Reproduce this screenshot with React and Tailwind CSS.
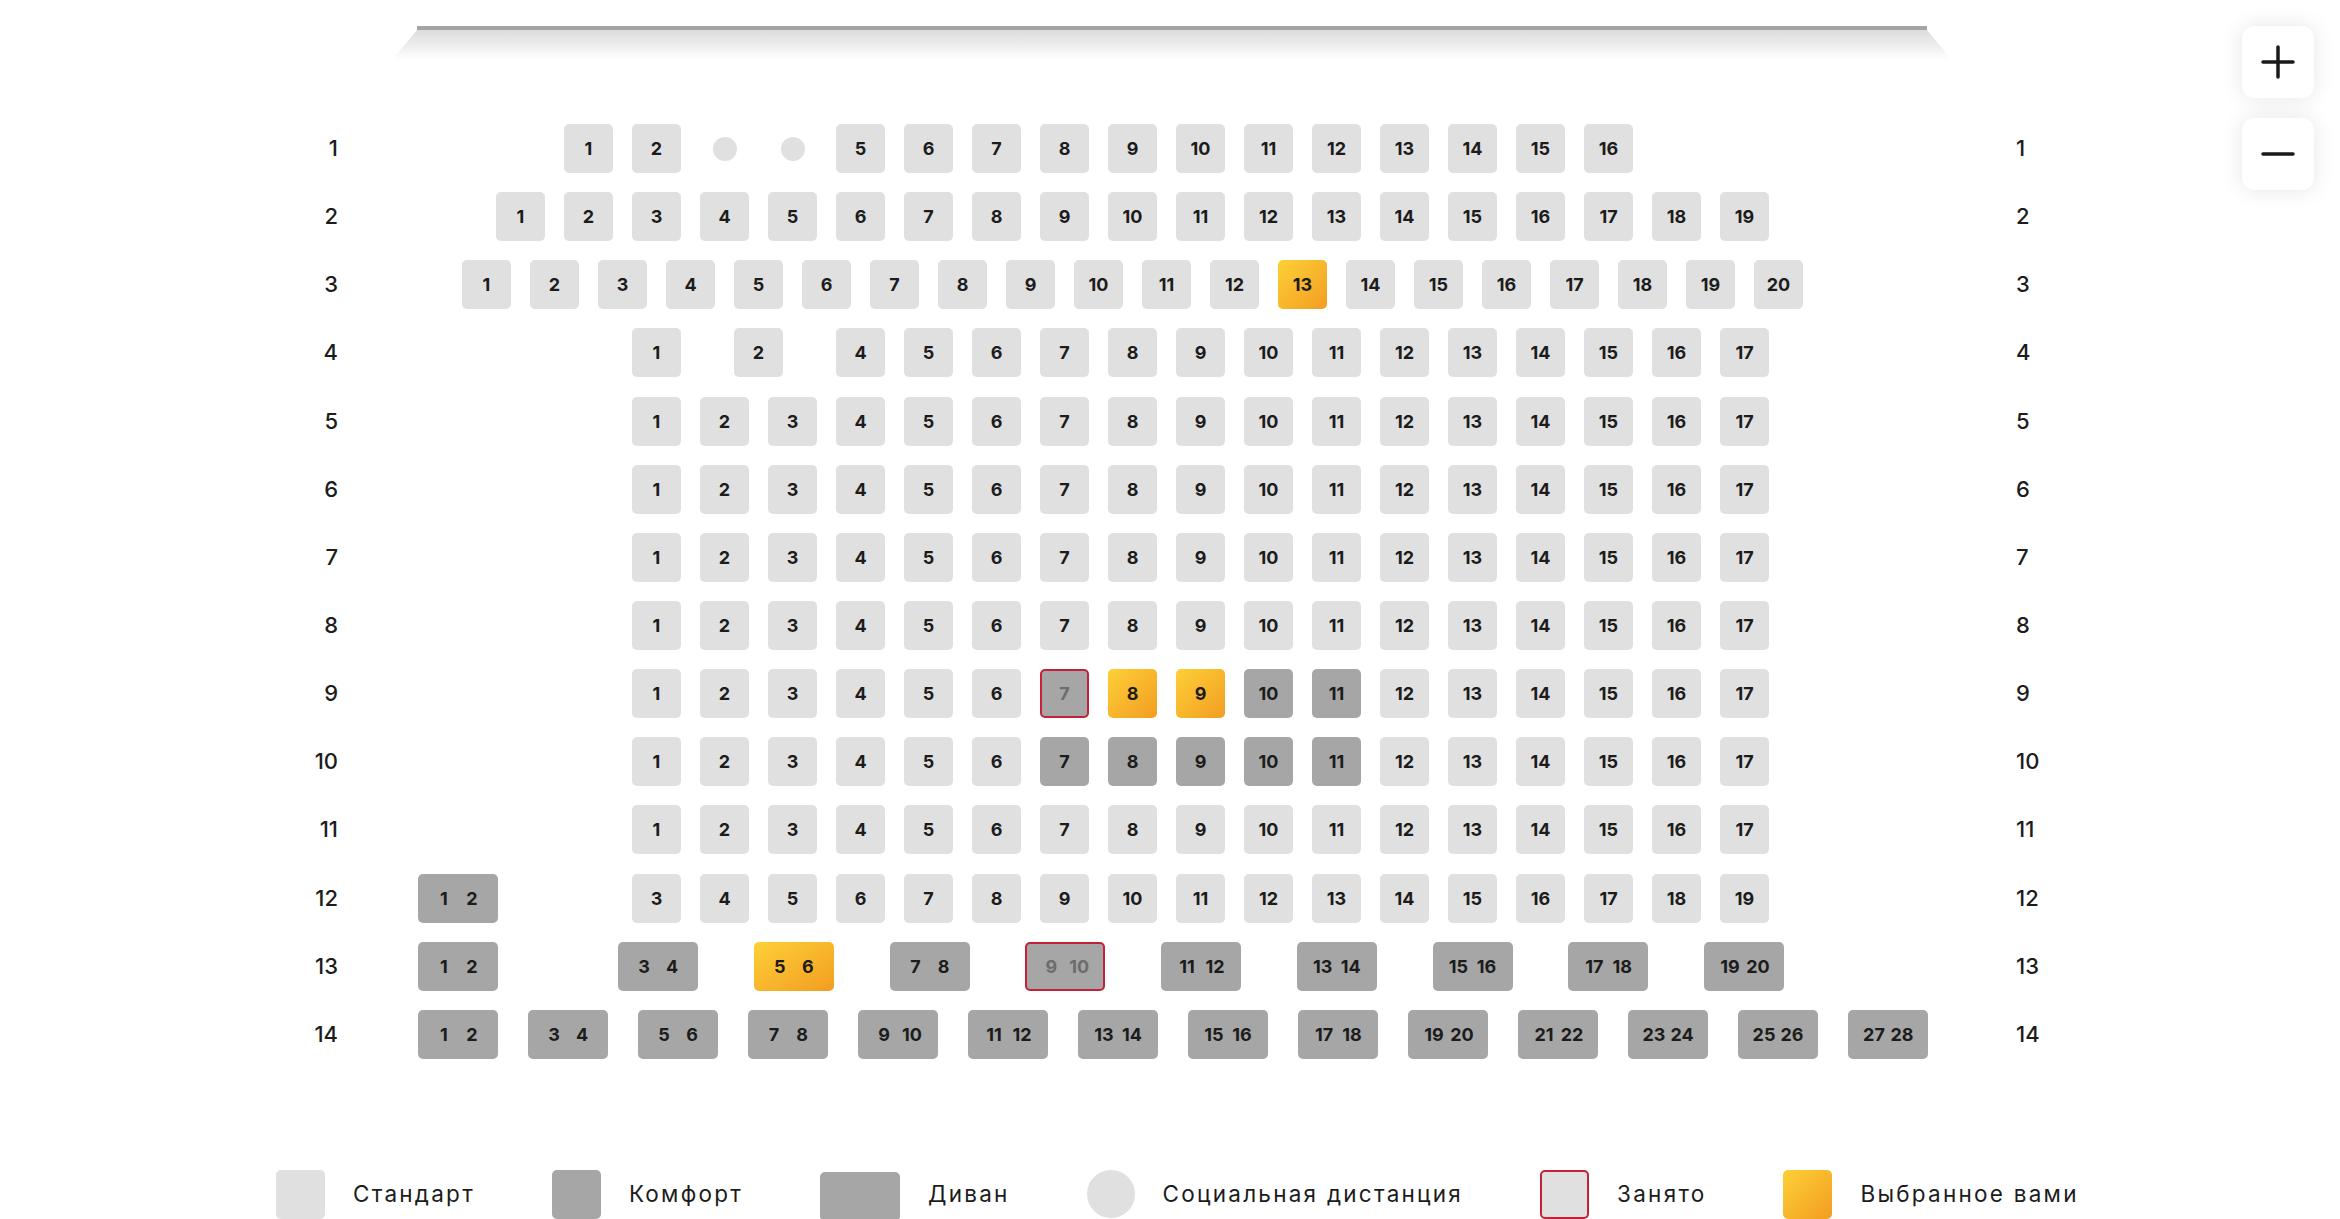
import React from "react";

const tone = {
  std: "bg-[#e0e0e0] text-[#1c1c1c]",
  cmf: "bg-[#a6a6a6] text-[#1c1c1c]",
  busy: "bg-[#a6a6a6] text-[#6c6c6c] border-2 border-[#c4203a]",
  sel: "bg-linear-to-br from-[#fdd037] to-[#f29d22] text-[#1c1c1c]",
};

const range = (a, b) => Array.from({ length: b - a + 1 }, (_, i) => a + i);
const plain = (a, b, type = "std") => range(a, b).map((n) => ({ n, type }));

// rows 1..11: pitch 68 (49 seat + 19 gap)
const rows = [
  { label: 1, pad: "pl-[146px]", seats: [...plain(1, 2), { n: 3, type: "dist" }, { n: 4, type: "dist" }, ...plain(5, 16)] },
  { label: 2, pad: "pl-[78px]", seats: plain(1, 19) },
  { label: 3, pad: "pl-[44px]", seats: [...plain(1, 12), { n: 13, type: "sel" }, ...plain(14, 20)] },
  { label: 4, pad: "pl-[214px]", seats: [{ n: 1, type: "std" }, { n: 2, type: "std", ml: "ml-[34px]" }, { n: 4, type: "std", ml: "ml-[34px]" }, ...plain(5, 17)] },
  { label: 5, pad: "pl-[214px]", seats: plain(1, 17) },
  { label: 6, pad: "pl-[214px]", seats: plain(1, 17) },
  { label: 7, pad: "pl-[214px]", seats: plain(1, 17) },
  { label: 8, pad: "pl-[214px]", seats: plain(1, 17) },
  {
    label: 9, pad: "pl-[214px]",
    seats: [...plain(1, 6), { n: 7, type: "busy" }, { n: 8, type: "sel" }, { n: 9, type: "sel" }, ...plain(10, 11, "cmf"), ...plain(12, 17)],
  },
  { label: 10, pad: "pl-[214px]", seats: [...plain(1, 6), ...plain(7, 11, "cmf"), ...plain(12, 17)] },
  { label: 11, pad: "pl-[214px]", seats: plain(1, 17) },
];

const row13 = [
  { a: 1, b: 2, type: "cmf" },
  { a: 3, b: 4, type: "cmf", ml: "ml-[64.25px]" },
  { a: 5, b: 6, type: "sel" },
  { a: 7, b: 8, type: "cmf" },
  { a: 9, b: 10, type: "busy" },
  { a: 11, b: 12, type: "cmf" },
  { a: 13, b: 14, type: "cmf" },
  { a: 15, b: 16, type: "cmf" },
  { a: 17, b: 18, type: "cmf" },
  { a: 19, b: 20, type: "cmf" },
];

const row14 = range(0, 13).map((i) => ({ a: i * 2 + 1, b: i * 2 + 2, type: "cmf" }));

function Seat({ n, type, ml = "" }) {
  if (type === "dist") {
    return (
      <div className={`w-[49px] h-[49px] shrink-0 flex items-center justify-center ${ml}`}>
        <div className="w-[24px] h-[24px] rounded-full bg-[#e0e0e0]" />
      </div>
    );
  }
  return (
    <div className={`w-[49px] h-[49px] shrink-0 rounded-[5px] flex items-center justify-center text-[18px] font-bold ${tone[type]} ${ml}`}>
      {n}
    </div>
  );
}

function Sofa({ a, b, type, ml = "" }) {
  return (
    <div className={`w-[80px] h-[49px] shrink-0 rounded-[5px] flex items-center justify-center text-[18px] font-bold ${tone[type]} ${ml}`}>
      <span className="w-[28px] text-center">{a}</span>
      <span className="w-[28px] text-center">{b}</span>
    </div>
  );
}

function Row({ label, children, area }) {
  return (
    <div className="flex items-center h-[49px]">
      <div className="ml-[288px] w-[50px] text-right text-[22px] font-medium text-[#1c1c1c]">{label}</div>
      <div className={`ml-[80px] w-[1510px] flex ${area}`}>{children}</div>
      <div className="ml-[88px] text-[22px] font-medium text-[#1c1c1c]">{label}</div>
    </div>
  );
}

function LegendItem({ swatch, text }) {
  return (
    <div className="flex items-center gap-[28px]">
      {swatch}
      <span className="text-[22.5px] tracking-[0.1em] text-[#1c1c1c]">{text}</span>
    </div>
  );
}

export default function App() {
  return (
    <div className="relative w-full h-[1219px] bg-white overflow-hidden font-[Inter,sans-serif]">
      {/* screen */}
      <div className="pt-[26px]">
        <div className="ml-[392px] w-[1560px]">
          <div className="mx-[25px] h-[4px] bg-[#a4a4a4]" />
          <div className="h-[30px] bg-linear-to-b from-[#dcdcdc] to-white [clip-path:polygon(25px_0,1535px_0,100%_100%,0_100%)]" />
        </div>
      </div>

      {/* zoom controls */}
      <div className="absolute top-[26px] right-[26px] flex flex-col gap-[20px]">
        <button className="w-[72px] h-[72px] rounded-[12px] bg-white shadow-[0_0_22px_rgba(0,0,0,0.10)] flex items-center justify-center">
          <svg width="34" height="34" viewBox="0 0 34 34" fill="none" stroke="#1a1a1a" strokeWidth="3.5" strokeLinecap="round">
            <path d="M17 2v30M2 17h30" />
          </svg>
        </button>
        <button className="w-[72px] h-[72px] rounded-[12px] bg-white shadow-[0_0_22px_rgba(0,0,0,0.10)] flex items-center justify-center">
          <svg width="34" height="34" viewBox="0 0 34 34" fill="none" stroke="#1a1a1a" strokeWidth="3.5" strokeLinecap="round">
            <path d="M2 17h30" />
          </svg>
        </button>
      </div>

      {/* seats */}
      <div className="mt-[64px] flex flex-col gap-[19.15px]">
        {rows.map((r) => (
          <Row key={r.label} label={r.label} area={`gap-[19px] ${r.pad}`}>
            {r.seats.map((s) => (
              <Seat key={s.n} {...s} />
            ))}
          </Row>
        ))}
        <Row label={12} area="gap-[19px]">
          <Sofa a={1} b={2} type="cmf" />
          {range(3, 19).map((n) => (
            <Seat key={n} n={n} type="std" ml={n === 3 ? "ml-[115px]" : ""} />
          ))}
        </Row>
        <Row label={13} area="gap-[55.75px]">
          {row13.map((s) => (
            <Sofa key={s.a} {...s} />
          ))}
        </Row>
        <Row label={14} area="gap-[30px]">
          {row14.map((s) => (
            <Sofa key={s.a} {...s} />
          ))}
        </Row>
      </div>

      {/* legend */}
      <div className="mt-[109px] ml-[276px] flex items-center gap-[77px]">
        <LegendItem swatch={<div className="w-[49px] h-[49px] rounded-[5px] bg-[#e0e0e0]" />} text="Стандарт" />
        <LegendItem swatch={<div className="w-[49px] h-[49px] rounded-[5px] bg-[#a6a6a6]" />} text="Комфорт" />
        <LegendItem swatch={<div className="w-[80px] h-[49px] mt-[4px] rounded-[5px] bg-[#a6a6a6]" />} text="Диван" />
        <LegendItem swatch={<div className="w-[48px] h-[48px] rounded-full bg-[#e0e0e0]" />} text="Социальная дистанция" />
        <LegendItem swatch={<div className="w-[49px] h-[49px] rounded-[5px] bg-[#e0e0e0] border-2 border-[#c4203a]" />} text="Занято" />
        <LegendItem swatch={<div className="w-[49px] h-[49px] rounded-[5px] bg-linear-to-br from-[#fdd037] to-[#f29d22]" />} text="Выбранное вами" />
      </div>
    </div>
  );
}
